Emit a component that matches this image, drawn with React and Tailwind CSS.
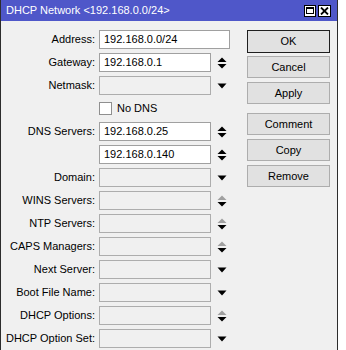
import React from "react";

const FONT = { fontFamily: '"Liberation Sans", Arial, sans-serif' };

function UpDown({ grayUp }) {
  return (
    <svg width="10" height="12" viewBox="0 0 10 12">
      <polygon points="0.5,5 5,0.5 9.5,5" fill={grayUp ? "#a0a0a0" : "#000"} />
      <polygon points="0.5,7 9.5,7 5,11.5" fill="#000" />
    </svg>
  );
}

function Down() {
  return (
    <svg width="10" height="6" viewBox="0 0 10 6">
      <polygon points="0.5,0.5 9.5,0.5 5,5.5" fill="#000" />
    </svg>
  );
}

function Row({ label, value, wide, arrow, grayUp, disabled }) {
  return (
    <div className="flex items-center h-[19px]">
      <div className="w-[94px] text-right whitespace-nowrap">{label}</div>
      <div
        className={
          "ml-[4px] h-[19px] border pl-[4px] leading-[17px] whitespace-nowrap " +
          (wide ? "w-[131px] " : "w-[112px] ") +
          (disabled ? "bg-[#f0f0f0] border-[#adadad]" : "bg-white border-[#a0a0a0]")
        }
      >
        {value}
      </div>
      {!wide && (
        <div className="w-[22px] flex justify-center items-center">
          {arrow === "ud" ? <UpDown grayUp={grayUp} /> : arrow === "d" ? <Down /> : null}
        </div>
      )}
    </div>
  );
}

function Btn({ children, primary }) {
  return (
    <div
      className={
        "w-[83px] flex items-center justify-center bg-[#e1e1e1] border " +
        (primary ? "h-[23px] border-[#1f1f1f]" : "h-[22px] border-[#adadad]")
      }
    >
      {children}
    </div>
  );
}

export default function App() {
  return (
    <div className="w-[346px] h-[350px] bg-white overflow-hidden text-[11px] text-black" style={FONT}>
      <div className="w-[338px] h-[360px] bg-[#f0f0f0] border-x border-[#2c2c2c] flex flex-col">
        <div className="h-[21px] bg-[#4f57c9] flex items-center pl-[5px] pr-[6px] text-white text-[11px]">
          <div className="flex-1 whitespace-nowrap">DHCP Network &lt;192.168.0.0/24&gt;</div>
          <div className="flex gap-[2px]">
            <div className="w-[12px] h-[12px] bg-white border border-black flex items-center justify-center">
              <div className="w-[8px] h-[7px] border border-black border-t-2"></div>
            </div>
            <div className="w-[13px] h-[12px] bg-white border border-black flex items-center justify-center">
              <svg width="9" height="8" viewBox="0 0 9 8">
                <path d="M1 0.5 L8 7.5 M8 0.5 L1 7.5" stroke="#000" strokeWidth="1.8" />
              </svg>
            </div>
          </div>
        </div>
        <div className="flex pt-[9px]">
          <div className="w-[246px] flex flex-col gap-[4px]">
            <Row label="Address:" value="192.168.0.0/24" wide />
            <Row label="Gateway:" value="192.168.0.1" arrow="ud" />
            <Row label="Netmask:" arrow="d" disabled />
            <div className="flex items-center h-[19px]">
              <div className="w-[98px]"></div>
              <div className="w-[13px] h-[13px] bg-white border border-[#8f8f8f]"></div>
              <div className="ml-[5px]">No DNS</div>
            </div>
            <Row label="DNS Servers:" value="192.168.0.25" arrow="ud" />
            <Row label="" value="192.168.0.140" arrow="ud" />
            <Row label="Domain:" arrow="d" disabled />
            <Row label="WINS Servers:" arrow="ud" grayUp disabled />
            <Row label="NTP Servers:" arrow="ud" grayUp disabled />
            <Row label="CAPS Managers:" arrow="ud" grayUp disabled />
            <Row label="Next Server:" arrow="d" disabled />
            <Row label="Boot File Name:" arrow="d" disabled />
            <Row label="DHCP Options:" arrow="ud" grayUp disabled />
            <Row label="DHCP Option Set:" arrow="d" disabled />
          </div>
          <div className="flex flex-col">
            <Btn primary>OK</Btn>
            <div className="mt-[3px] flex flex-col gap-[4px]">
              <Btn>Cancel</Btn>
              <Btn>Apply</Btn>
            </div>
            <div className="mt-[9px] flex flex-col gap-[4px]">
              <Btn>Comment</Btn>
              <Btn>Copy</Btn>
              <Btn>Remove</Btn>
            </div>
          </div>
        </div>
      </div>
    </div>
  );
}
